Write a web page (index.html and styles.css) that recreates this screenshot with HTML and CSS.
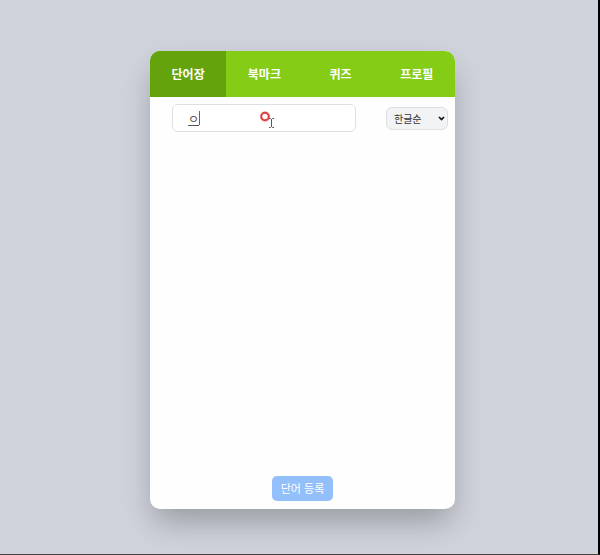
FILE: index.html
```html
<!DOCTYPE html>
<html lang="ko">
<head>
<meta charset="utf-8">
<meta name="viewport" content="width=device-width, initial-scale=1">
<title>단어장</title>
<link rel="stylesheet" href="styles.css">
</head>
<body>
<main class="card">
  <nav class="tabs">
    <a class="tab tab-active" href="#words" aria-current="page">단어장</a>
    <a class="tab" href="#bookmarks">북마크</a>
    <a class="tab" href="#quiz">퀴즈</a>
    <a class="tab" href="#profile">프로필</a>
  </nav>
  <div class="toolbar">
    <div class="search">
      <input class="search-input" type="text" value="ㅇ" aria-label="단어 검색">
      <span class="caret"></span>
      <svg class="pointer" width="16" height="18" viewBox="0 0 16 18" aria-hidden="true">
        <circle cx="5" cy="5.500" r="4" fill="#fff" stroke="#f5b5b5" stroke-width="2.500"/>
        <circle cx="5" cy="5.500" r="3.700" fill="#fff" stroke="#dc4040" stroke-width="2"/>
        <path d="M9 7.500h1.500l1 1 1-1h1.500M11.500 8v8M9 16.500h1.500l1-1 1 1h1.500" fill="none" stroke="#555"/>
      </svg>
    </div>
    <div class="sort-box">
      <select class="sort" aria-label="정렬">
        <option>한글순</option>
      </select>
      <svg class="chevron" width="7" height="5" viewBox="0 0 7 5" aria-hidden="true">
        <path d="M1 1l2.500 2.500L6 1" fill="none" stroke="#111" stroke-width="1.700"/>
      </svg>
    </div>
  </div>
  <section class="words" aria-label="단어 목록"></section>
  <footer class="actions">
    <button class="add" type="button">단어 등록</button>
  </footer>
</main>
</body>
</html>
```
FILE: styles.css
```css
* {
  box-sizing: border-box;
}

body {
  display: flex;
  justify-content: center;
  align-items: center;
  min-height: 100vh;
  margin: 0;
  padding: 6px 0 0 7px;
  border-right: 2px solid #000;
  border-bottom: 1px solid #444;
  background: #d0d3dc;
  font-family: "Noto Sans CJK KR", sans-serif;
}

.card {
  display: flex;
  flex-direction: column;
  width: 51.6%;
  min-height: 82.4vh;
  overflow: hidden;
  border-radius: 10px;
  background: #fefefe;
  box-shadow: 0 16px 32px -4px rgb(0 0 0 / 28%);
}

.tabs {
  display: grid;
  grid-template-columns: repeat(4, 1fr);
  background: #84cc16;
}

.tab {
  padding: 12px 0;
  color: #fff;
  font-size: 12px;
  font-weight: 700;
  line-height: 22px;
  text-align: center;
  text-decoration: none;
}

.tab-active {
  background: #65a30d;
}

.toolbar {
  display: flex;
  align-items: center;
  gap: 30px;
  padding: 7px 7px 0 22px;
}

.search {
  position: relative;
  flex: 1;
  min-width: 0;
}

.search-input {
  display: block;
  width: 100%;
  height: 28px;
  padding: 0 15px;
  border: 1px solid #dddfe4;
  border-radius: 6px;
  background: #fff;
  color: #555;
  font: 12px "Noto Sans CJK KR", sans-serif;
  text-decoration: underline;
}

.caret {
  position: absolute;
  top: 7px;
  left: 27px;
  width: 1px;
  height: 14px;
  background: #666;
}

.pointer {
  position: absolute;
  top: 7px;
  left: 88px;
}

.sort-box {
  position: relative;
}

.sort {
  display: block;
  width: 62px;
  height: 23px;
  padding: 0 7px;
  appearance: none;
  border: 1px solid #dddfe4;
  border-radius: 6px;
  background: #f1f3f5;
  color: #333;
  font: 10px "Noto Sans CJK KR", sans-serif;
}

.chevron {
  position: absolute;
  top: 9px;
  right: 3px;
  pointer-events: none;
}

.words {
  flex: 1;
}

.actions {
  display: flex;
  justify-content: center;
  padding-bottom: 8px;
}

.add {
  padding: 0 9px;
  border: 0;
  border-radius: 5px;
  background: #93c0fb;
  color: #fff;
  font: 11px/25px "Noto Sans CJK KR", sans-serif;
}
```
